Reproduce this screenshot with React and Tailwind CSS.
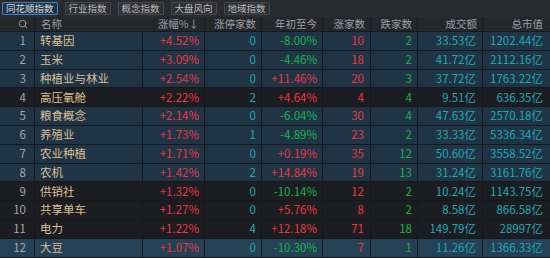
import { Search } from 'lucide-react'

const tabs = ['同花顺指数', '行业指数', '概念指数', '大盘风向', '地域指数']
const cols = 'grid grid-cols-[35px_108px_62px_57px_61px_48px_47px_65px_67px]'

const rows = [
  [1, '转基因', '+4.52%', 0, '-8.00%', 10, 2, '33.53亿', '1202.44亿', 'blue'],
  [2, '玉米', '+3.09%', 0, '-4.46%', 18, 2, '41.72亿', '2112.16亿', 'blue'],
  [3, '种植业与林业', '+2.54%', 0, '+11.46%', 20, 3, '37.72亿', '1763.22亿', 'blue'],
  [4, '高压氧舱', '+2.22%', 2, '+4.64%', 4, 4, '9.51亿', '636.35亿', 'dark'],
  [5, '粮食概念', '+2.14%', 0, '-6.04%', 30, 4, '47.63亿', '2570.18亿', 'blue'],
  [6, '养殖业', '+1.73%', 1, '-4.89%', 23, 2, '33.33亿', '5336.34亿', 'blue'],
  [7, '农业种植', '+1.71%', 0, '+0.19%', 35, 12, '50.60亿', '3558.52亿', 'blue'],
  [8, '农机', '+1.42%', 2, '+14.84%', 19, 13, '31.24亿', '3161.76亿', 'blue'],
  [9, '供销社', '+1.32%', 0, '-10.14%', 12, 2, '10.24亿', '1143.75亿', 'dark'],
  [10, '共享单车', '+1.27%', 0, '+5.76%', 8, 2, '8.58亿', '866.58亿', 'dark'],
  [11, '电力', '+1.22%', 4, '+12.18%', 71, 18, '149.79亿', '28997亿', 'dark'],
  [12, '大豆', '+1.07%', 0, '-10.30%', 7, 1, '11.26亿', '1366.33亿', 'sel'],
]

const rowBg = { blue: 'bg-[#1f3546]', dark: 'bg-[#1c1d21]', sel: 'bg-[#244156]' }
const cell = 'flex items-center justify-end pr-[5px] border-r border-[#15181c] whitespace-nowrap'
const sign = (v) => (v.startsWith('-') ? 'text-[#1db14b]' : 'text-[#e8373f]')

export default function App() {
  return (
    <div className="w-[550px] h-[258px] overflow-hidden bg-[#1c1d21] text-[11.5px] leading-none" style={{ fontFamily: '"Noto Sans CJK SC", "Noto Sans", sans-serif' }}>
      <div className="h-[17px] bg-[#2a2b2f] flex items-center gap-[7px] pl-[2px]">
        {tabs.map((t, i) => (
          <div
            key={t}
            className={`h-[13px] px-[3px] flex items-center text-[9.5px] border rounded-[1px] ${
              i === 0 ? 'border-[#3c84c6] bg-[#1d3347] text-[#d6dde4]' : 'border-[#45474c] bg-[#2f3034] text-[#b8b9bc]'
            }`}
          >
            {t}
          </div>
        ))}
      </div>
      <div className={`${cols} h-[15px] bg-[#25272b] text-[10.5px] text-[#9c9ea3] border-b border-[#15181c]`}>
        <div className="flex items-center justify-end pr-[6px] border-r border-[#1a1c20]">
          <Search size={10} strokeWidth={2} className="text-[#a5a7ab]" />
        </div>
        <div className="flex items-center pl-[6px]">名称</div>
        <div className="flex items-center justify-end pr-[5px] border-r border-[#1a1c20]">涨幅%↓</div>
        <div className="flex items-center justify-end pr-[5px] border-r border-[#1a1c20]">涨停家数</div>
        <div className="flex items-center justify-end pr-[5px] border-r border-[#1a1c20]">年初至今</div>
        <div className="flex items-center justify-end pr-[5px] border-r border-[#1a1c20]">涨家数</div>
        <div className="flex items-center justify-end pr-[5px] border-r border-[#1a1c20]">跌家数</div>
        <div className="flex items-center justify-end pr-[5px] border-r border-[#1a1c20]">成交额</div>
        <div className="flex items-center justify-end pr-[7px]">总市值</div>
      </div>
      {rows.map((r) => (
        <div key={r[0]} className={`${cols} h-[18.8px] border-b border-[#15181c] ${rowBg[r[9]]}`}>
          <div className={`${cell} pr-[8px] text-[#a3a6ab]`}>{r[0]}</div>
          <div className="flex items-center pl-[5px] border-r border-[#15181c] text-[#dcbf92]">{r[1]}</div>
          <div className={`${cell} text-[#e8373f]`}>{r[2]}</div>
          <div className={`${cell} pr-[4px] text-[#21a8b4]`}>{r[3]}</div>
          <div className={`${cell} pr-[1px] ${sign(r[4])}`}>{r[4]}</div>
          <div className={`${cell} pr-[6px] text-[#e8373f]`}>{r[5]}</div>
          <div className={`${cell} pr-[4px] text-[#1db14b]`}>{r[6]}</div>
          <div className={`${cell} pr-[6px] text-[#21a8b4]`}>{r[7]}</div>
          <div className="flex items-center justify-end pr-[7px] text-[#21a8b4]">{r[8]}</div>
        </div>
      ))}
    </div>
  )
}
